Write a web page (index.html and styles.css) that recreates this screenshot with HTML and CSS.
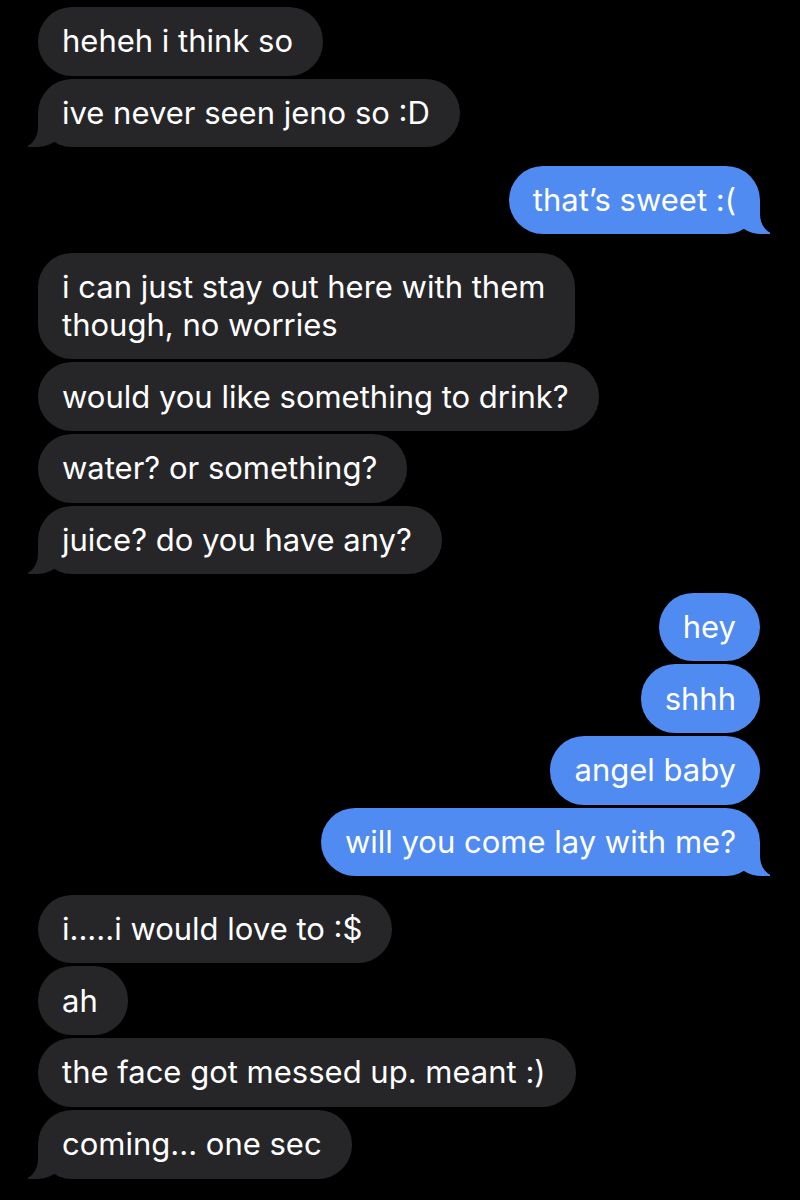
FILE: index.html
```html
<!DOCTYPE html>
<html lang="en">
<head>
<meta charset="utf-8">
<title>Messages</title>
<link rel="stylesheet" href="styles.css">
</head>
<body>
<main class="thread">
  <section class="group recv">
    <p class="bubble">heheh i think so</p>
    <p class="bubble tail">ive never seen jeno so :D</p>
  </section>
  <section class="group sent">
    <p class="bubble tail">that’s sweet :(</p>
  </section>
  <section class="group recv">
    <p class="bubble">i can just stay out here with them<br>though, no worries</p>
    <p class="bubble">would you like something to drink?</p>
    <p class="bubble">water? or something?</p>
    <p class="bubble tail">juice? do you have any?</p>
  </section>
  <section class="group sent">
    <p class="bubble">hey</p>
    <p class="bubble">shhh</p>
    <p class="bubble">angel baby</p>
    <p class="bubble tail">will you come lay with me?</p>
  </section>
  <section class="group recv">
    <p class="bubble">i.....i would love to :$</p>
    <p class="bubble">ah</p>
    <p class="bubble">the face got messed up. meant :)</p>
    <p class="bubble tail">coming... one sec</p>
  </section>
</main>
</body>
</html>
```
FILE: styles.css
```css
html, body {
  margin: 0;
  background: #000;
}

body {
  font-family: "Inter", "Liberation Sans", sans-serif;
  color: #fff;
}

.thread {
  display: flex;
  flex-direction: column;
  gap: 18.3px;
  padding: 7px 40px 0 38px;
}

.group {
  display: flex;
  flex-direction: column;
  gap: 3px;
}

.group.recv { align-items: flex-start; }
.group.sent { align-items: flex-end; }

.bubble {
  position: relative;
  isolation: isolate;
  margin: 0;
  max-width: 620px;
  padding: 15.35px 30px 15.35px 24px;
  border-radius: 34px;
  font-size: 31px;
  line-height: 38px;
  white-space: nowrap;
}

.recv .bubble { background: #262629; }
.sent .bubble { background: #4f8bf0; padding-right: 24px; }

.bubble.tail::before,
.bubble.tail::after {
  content: "";
  position: absolute;
  bottom: 0;
  height: 34px;
  z-index: -1;
}

.recv .bubble.tail::before {
  left: -10px;
  width: 34px;
  background: #262629;
  border-bottom-right-radius: 26px 18px;
}

.recv .bubble.tail::after {
  left: -40px;
  width: 40px;
  background: #000;
  border-bottom-right-radius: 16px 20px;
}

.sent .bubble.tail::before {
  right: -10px;
  width: 34px;
  background: #4f8bf0;
  border-bottom-left-radius: 26px 18px;
}

.sent .bubble.tail::after {
  right: -40px;
  width: 40px;
  background: #000;
  border-bottom-left-radius: 16px 20px;
}
```
